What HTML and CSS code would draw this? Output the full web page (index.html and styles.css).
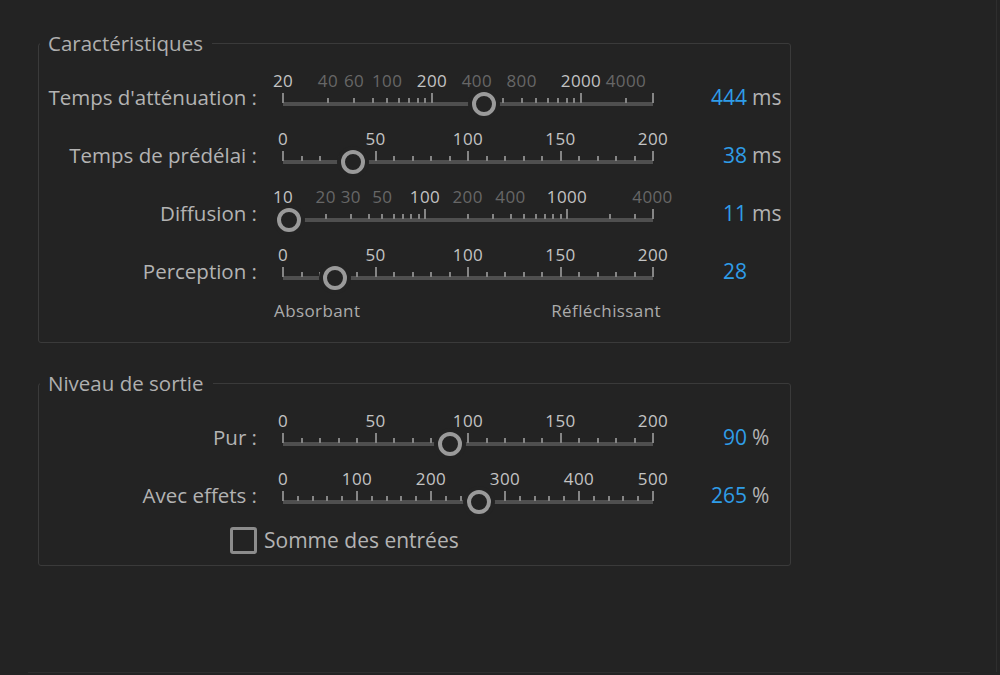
FILE: index.html
```html
<!DOCTYPE html>
<html lang="fr">
<head>
    <meta charset="UTF-8">
    <title>Réverbération</title>
    <link rel="stylesheet" href="styles.css">
</head>
<body>
    <div class="panel">
        <fieldset class="group">
            <legend>Caractéristiques</legend>
            <div class="param">
                <span class="param-label">Temps d'atténuation :</span>
                <div class="slider" id="decay"></div>
                <span class="param-value">444</span>
                <span class="param-unit">ms</span>
            </div>
            <div class="param">
                <span class="param-label">Temps de prédélai :</span>
                <div class="slider" id="predelay"></div>
                <span class="param-value">38</span>
                <span class="param-unit">ms</span>
            </div>
            <div class="param">
                <span class="param-label">Diffusion :</span>
                <div class="slider" id="diffusion"></div>
                <span class="param-value">11</span>
                <span class="param-unit">ms</span>
            </div>
            <div class="param">
                <span class="param-label">Perception :</span>
                <div class="slider" id="perception"></div>
                <span class="param-value">28</span>
            </div>
            <div class="range-ends">
                <span>Absorbant</span>
                <span>Réfléchissant</span>
            </div>
        </fieldset>

        <fieldset class="group group-output">
            <legend>Niveau de sortie</legend>
            <div class="param">
                <span class="param-label">Pur :</span>
                <div class="slider" id="dry"></div>
                <span class="param-value">90</span>
                <span class="param-unit">%</span>
            </div>
            <div class="param">
                <span class="param-label">Avec effets :</span>
                <div class="slider" id="wet"></div>
                <span class="param-value">265</span>
                <span class="param-unit">%</span>
            </div>
            <label class="check-row">
                <span class="checkbox"></span>
                <span>Somme des entrées</span>
            </label>
        </fieldset>
    </div>
    <div class="bottom-line"></div>

    <script>
        const WIDTH = 370;

        function linScale(min, max) {
            return v => (v - min) / (max - min) * WIDTH;
        }

        function logScale(min, pxPerDecade) {
            return v => Math.log10(v / min) * pxPerDecade;
        }

        function range(from, to, step) {
            const out = [];
            for (let v = from; v <= to + 0.0001; v += step) out.push(v);
            return out;
        }

        function linear(min, max, step, majorStep, value) {
            const labels = range(min, max, majorStep).map(v => [v, true]);
            return {
                scale: linScale(min, max),
                minor: range(min, max, step).filter(v => v % majorStep !== 0),
                major: range(min, max, majorStep),
                labels: labels,
                value: value
            };
        }

        const sliders = {
            decay: {
                scale: logScale(20, 149),
                minor: [40, 60, 80, 100, 120, 140, 160, 180, 400, 600, 800, 1000, 1200, 1400, 1600, 1800, 4000],
                major: [20, 200, 2000],
                endTick: true,
                labels: [[20, true], [40, false], [60, false], [100, false], [200, true],
                         [400, false], [800, false], [2000, true], [4000, false]],
                value: 444
            },
            predelay: linear(0, 200, 10, 50, 38),
            diffusion: {
                scale: logScale(10, 142),
                minor: range(20, 90, 10).concat(range(200, 900, 100), [2000, 3000]),
                major: [10, 100, 1000, 4000],
                labels: [[10, true], [20, false], [30, false], [50, false], [100, true],
                         [200, false], [400, false], [1000, true], [4000, false]],
                value: 11
            },
            perception: linear(0, 200, 10, 50, 28),
            dry: linear(0, 200, 10, 50, 90),
            wet: linear(0, 500, 20, 100, 265)
        };

        function addEl(parent, cls, left) {
            const el = document.createElement('div');
            el.className = cls;
            if (left !== undefined) el.style.left = left.toFixed(1) + 'px';
            parent.appendChild(el);
            return el;
        }

        Object.keys(sliders).forEach(function(id) {
            const cfg = sliders[id];
            const root = document.getElementById(id);

            addEl(root, 'track');
            cfg.minor.forEach(v => addEl(root, 'tick', cfg.scale(v)));
            cfg.major.forEach(v => addEl(root, 'tick tick-major', cfg.scale(v)));
            if (cfg.endTick) addEl(root, 'tick tick-major', WIDTH);

            cfg.labels.forEach(function(item) {
                const label = addEl(root, item[1] ? 'tick-label' : 'tick-label dim', cfg.scale(item[0]));
                label.textContent = item[0];
            });

            addEl(root, 'thumb', cfg.scale(cfg.value));
        });
    </script>
</body>
</html>
```

FILE: styles.css
```css
body {
    margin: 0;
    background: #232323;
    font-family: "Open Sans", sans-serif;
    color: #b3b3b3;
    overflow: hidden;
}

.panel {
    width: 997px;
    height: 672px;
    box-sizing: border-box;
    padding: 31px 0 0 38px;
    border-right: 1px solid #2e2e2e;
}

.group {
    width: 753px;
    min-width: 0;
    box-sizing: border-box;
    margin: 0;
    padding: 17px 0 22px 0;
    border: 1px solid #3a3a3a;
    border-radius: 3px;
}

.group-output {
    margin-top: 28px;
    padding-bottom: 11px;
}

.group legend {
    margin-left: 1px;
    padding: 0 9px 0 8px;
    font-size: 20.5px;
    line-height: 24px;
    color: #afafaf;
}

.param {
    display: flex;
    align-items: flex-start;
    height: 58px;
}

.param-label {
    width: 218px;
    margin-top: 13px;
    text-align: right;
    font-size: 20.5px;
    line-height: 24px;
    white-space: nowrap;
}

.param-value {
    width: 94px;
    margin-top: 13px;
    text-align: right;
    font-size: 21px;
    line-height: 24px;
    color: #2f9de8;
}

.param-unit {
    margin-left: 5px;
    margin-top: 13px;
    font-size: 21px;
    line-height: 24px;
}

/* slider */
.slider {
    position: relative;
    width: 370px;
    height: 58px;
    margin-left: 26px;
}

.track {
    position: absolute;
    left: 0;
    right: 0;
    top: 30px;
    height: 4px;
    background: #4f4f4f;
}

.tick {
    position: absolute;
    top: 26px;
    width: 2px;
    height: 5px;
    margin-left: -1px;
    background: #858585;
}

.tick-major {
    top: 21px;
    height: 10px;
}

.tick-label {
    position: absolute;
    top: 0;
    font-size: 17px;
    letter-spacing: 0.4px;
    line-height: 18px;
    color: #c4c4c4;
    transform: translateX(-50%);
    white-space: nowrap;
}

.tick-label.dim {
    color: #676767;
}

.thumb {
    position: absolute;
    top: 20px;
    width: 24px;
    height: 24px;
    margin-left: -12px;
    box-sizing: border-box;
    border: 4px solid #9a9a9a;
    border-radius: 50%;
    background: #232323;
    box-shadow: 0 0 0 4px #232323;
}

.range-ends {
    display: flex;
    justify-content: space-between;
    width: 387px;
    margin: -2px 0 0 235px;
    font-size: 17px;
    letter-spacing: 0.4px;
    line-height: 18px;
    color: #ababab;
}

.check-row {
    display: flex;
    align-items: center;
    margin: -2px 0 0 191px;
    height: 28px;
    font-size: 21px;
}

.checkbox {
    width: 27px;
    height: 27px;
    box-sizing: border-box;
    margin-right: 7px;
    border: 3px solid #8c8c8c;
    border-radius: 3px;
}

.bottom-line {
    width: 942px;
    height: 1px;
    margin-left: 28px;
    background: #2e2e2e;
}
```
